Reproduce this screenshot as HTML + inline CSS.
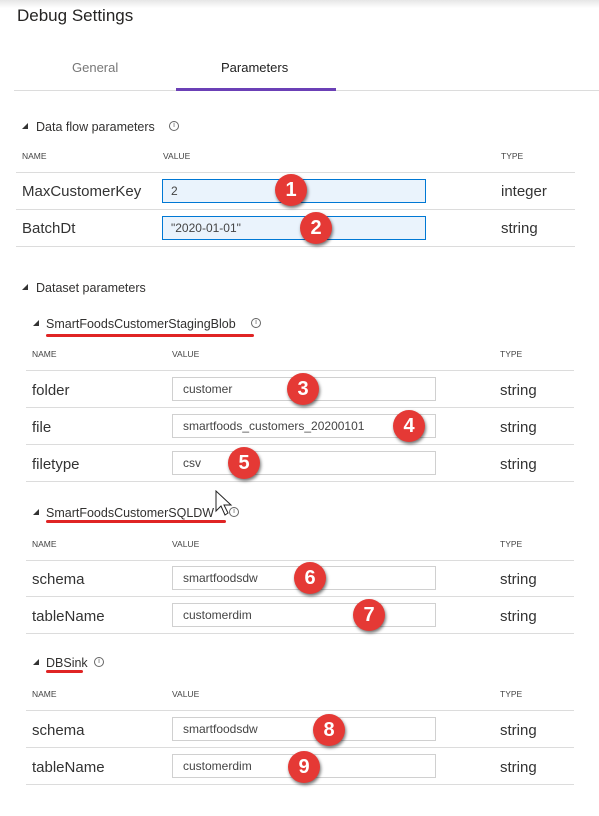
<!DOCTYPE html>
<html><head><meta charset="utf-8"><style>
*{margin:0;padding:0;box-sizing:border-box}
body{width:599px;height:816px;background:#fff;position:relative;overflow:hidden;font-family:"Segoe UI","Liberation Sans",sans-serif;color:#323130}
.a{position:absolute;white-space:nowrap}
.topshade{position:absolute;left:0;top:0;width:599px;height:8px;background:linear-gradient(#e6e6e6,#fff)}
.t{font-size:17px;left:17px;top:6px;color:#252423}
.tab{font-size:13px;top:60px}
.hl{position:absolute;height:1px;background:#dcdcdc}
.sec{font-size:12.5px;margin-top:3px}
.hd{font-size:8.5px;color:#444;margin-top:1px}
.nm{font-size:15px;color:#333;margin-top:3px}
.in{position:absolute;height:24px;border:1px solid #d0d0d0;background:#fff;font-size:12px;padding-left:10px;line-height:22px;color:#444}
.inb{border:1px solid #0078d4;background:#eaf3fc;padding-left:8px}
.b{position:absolute;width:32px;height:32px;border-radius:50%;background:#e53935;color:#fff;font:bold 20px "Liberation Sans",sans-serif;text-align:center;line-height:32px;box-shadow:1px 2px 3px rgba(0,0,0,.55)}
.ru{position:absolute;height:3px;background:#e02424;border-radius:2px}
.info{position:absolute;width:10px;height:10px;border:1px solid #666;border-radius:50%;font-size:7px;line-height:8px;text-align:center;color:#555}
</style></head><body>
<div class="topshade"></div>
<div class="a t">Debug Settings</div>
<div class="a tab" style="left:72px;color:#777">General</div>
<div class="a tab" style="left:221px;color:#222">Parameters</div>
<div class="hl" style="left:14px;top:90px;width:585px"></div>
<div style="position:absolute;left:176px;top:88px;width:160px;height:3px;background:#6b40b6"></div>

<svg class="a" style="left:21px;top:122px" width="8" height="8"><path d="M7 1V7H1Z" fill="#333"/></svg>
<div class="a sec" style="left:36px;top:117px">Data flow parameters</div>
<div class="info" style="left:169px;top:121px">i</div>
<div class="a hd" style="left:22px;top:150px">NAME</div>
<div class="a hd" style="left:163px;top:150px">VALUE</div>
<div class="a hd" style="left:501px;top:150px">TYPE</div>
<div class="hl" style="left:16px;top:172px;width:559px"></div>
<div class="a nm" style="left:22px;top:180px">MaxCustomerKey</div>
<div class="in inb" style="left:162px;top:179px;width:264px">2</div>
<div class="a nm" style="left:501px;top:180px">integer</div>
<div class="hl" style="left:16px;top:209px;width:559px"></div>
<div class="a nm" style="left:22px;top:217px">BatchDt</div>
<div class="in inb" style="left:162px;top:216px;width:264px">"2020-01-01"</div>
<div class="a nm" style="left:501px;top:217px">string</div>
<div class="hl" style="left:16px;top:246px;width:559px"></div>
<div class="b" style="left:275px;top:174px">1</div>
<div class="b" style="left:300px;top:212px">2</div>

<svg class="a" style="left:21px;top:283px" width="8" height="8"><path d="M7 1V7H1Z" fill="#333"/></svg>
<div class="a sec" style="left:36px;top:278px">Dataset parameters</div>

<svg class="a" style="left:32px;top:319px" width="8" height="8"><path d="M7 1V7H1Z" fill="#333"/></svg>
<div class="a sec" style="left:46px;top:314px">SmartFoodsCustomerStagingBlob</div>
<div class="info" style="left:251px;top:318px">i</div>
<div class="ru" style="left:46px;top:334px;width:208px"></div>
<div class="a hd" style="left:32px;top:348px">NAME</div>
<div class="a hd" style="left:172px;top:348px">VALUE</div>
<div class="a hd" style="left:500px;top:348px">TYPE</div>
<div class="hl" style="left:26px;top:370px;width:548px"></div>
<div class="a nm" style="left:32px;top:379px">folder</div>
<div class="in" style="left:172px;top:377px;width:264px">customer</div>
<div class="a nm" style="left:500px;top:379px">string</div>
<div class="hl" style="left:26px;top:407px;width:548px"></div>
<div class="a nm" style="left:32px;top:416px">file</div>
<div class="in" style="left:172px;top:414px;width:264px">smartfoods_customers_20200101</div>
<div class="a nm" style="left:500px;top:416px">string</div>
<div class="hl" style="left:26px;top:444px;width:548px"></div>
<div class="a nm" style="left:32px;top:453px">filetype</div>
<div class="in" style="left:172px;top:451px;width:264px">csv</div>
<div class="a nm" style="left:500px;top:453px">string</div>
<div class="hl" style="left:26px;top:481px;width:548px"></div>
<div class="b" style="left:287px;top:373px">3</div>
<div class="b" style="left:393px;top:410px">4</div>
<div class="b" style="left:228px;top:447px">5</div>

<svg class="a" style="left:32px;top:508px" width="8" height="8"><path d="M7 1V7H1Z" fill="#333"/></svg>
<div class="a sec" style="left:46px;top:503px">SmartFoodsCustomerSQLDW</div>
<div class="info" style="left:229px;top:507px">i</div>
<div class="ru" style="left:46px;top:520px;width:180px"></div>
<svg class="a" style="left:214px;top:490px" width="22" height="28"><path d="M2 1V21L7 16L11 25L14 23L10 15H17Z" fill="#fff" stroke="#222" stroke-width="1"/></svg>
<div class="a hd" style="left:32px;top:538px">NAME</div>
<div class="a hd" style="left:172px;top:538px">VALUE</div>
<div class="a hd" style="left:500px;top:538px">TYPE</div>
<div class="hl" style="left:26px;top:560px;width:548px"></div>
<div class="a nm" style="left:32px;top:568px">schema</div>
<div class="in" style="left:172px;top:566px;width:264px">smartfoodsdw</div>
<div class="a nm" style="left:500px;top:568px">string</div>
<div class="hl" style="left:26px;top:596px;width:548px"></div>
<div class="a nm" style="left:32px;top:605px">tableName</div>
<div class="in" style="left:172px;top:603px;width:264px">customerdim</div>
<div class="a nm" style="left:500px;top:605px">string</div>
<div class="hl" style="left:26px;top:633px;width:548px"></div>
<div class="b" style="left:294px;top:562px">6</div>
<div class="b" style="left:353px;top:599px">7</div>

<svg class="a" style="left:32px;top:658px" width="8" height="8"><path d="M7 1V7H1Z" fill="#333"/></svg>
<div class="a sec" style="left:46px;top:653px">DBSink</div>
<div class="info" style="left:94px;top:657px">i</div>
<div class="ru" style="left:46px;top:670px;width:37px"></div>
<div class="a hd" style="left:32px;top:688px">NAME</div>
<div class="a hd" style="left:172px;top:688px">VALUE</div>
<div class="a hd" style="left:500px;top:688px">TYPE</div>
<div class="hl" style="left:26px;top:710px;width:548px"></div>
<div class="a nm" style="left:32px;top:719px">schema</div>
<div class="in" style="left:172px;top:717px;width:264px">smartfoodsdw</div>
<div class="a nm" style="left:500px;top:719px">string</div>
<div class="hl" style="left:26px;top:747px;width:548px"></div>
<div class="a nm" style="left:32px;top:756px">tableName</div>
<div class="in" style="left:172px;top:754px;width:264px">customerdim</div>
<div class="a nm" style="left:500px;top:756px">string</div>
<div class="hl" style="left:26px;top:784px;width:548px"></div>
<div class="b" style="left:313px;top:714px">8</div>
<div class="b" style="left:288px;top:751px">9</div>
</body></html>
